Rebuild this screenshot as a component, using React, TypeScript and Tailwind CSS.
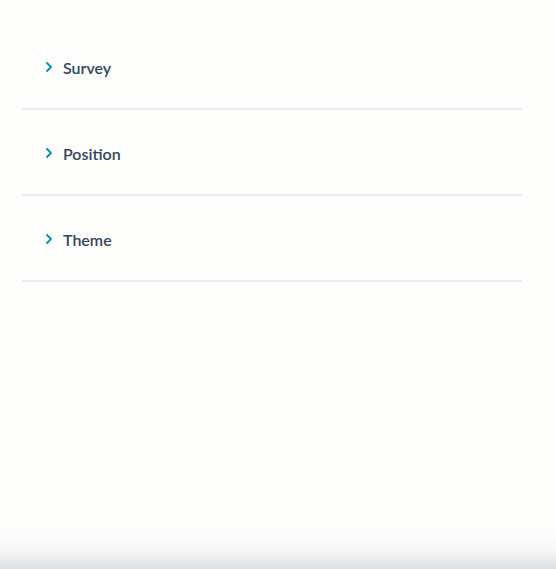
import { ChevronRight } from "lucide-react";

const sections = ["Survey", "Position", "Theme"];

export default function App() {
  return (
    <div className="relative h-[569px] w-[556px] overflow-hidden bg-[#fdfdfc]" style={{ fontFamily: "Lato, 'Open Sans', sans-serif" }}>
      <div className="w-[500px] ml-[22px] pt-[24px]">
        {sections.map((s) => (
          <button
            key={s}
            type="button"
            className="flex h-[86px] w-full items-center gap-[6px] border-b-2 border-[#eaeaf1] pl-[19px] pt-[4px] text-left"
          >
            <ChevronRight className="h-[16px] w-[16px] -translate-y-[1px] text-[#0091ae]" strokeWidth={2.75} />
            <span className="text-[16px] font-semibold text-[#33475b]">{s}</span>
          </button>
        ))}
      </div>
      <div className="absolute inset-x-0 bottom-0 h-[36px] bg-gradient-to-b from-transparent via-[#f3f4f6]/70 to-[#dcdfe4]" />
    </div>
  );
}
